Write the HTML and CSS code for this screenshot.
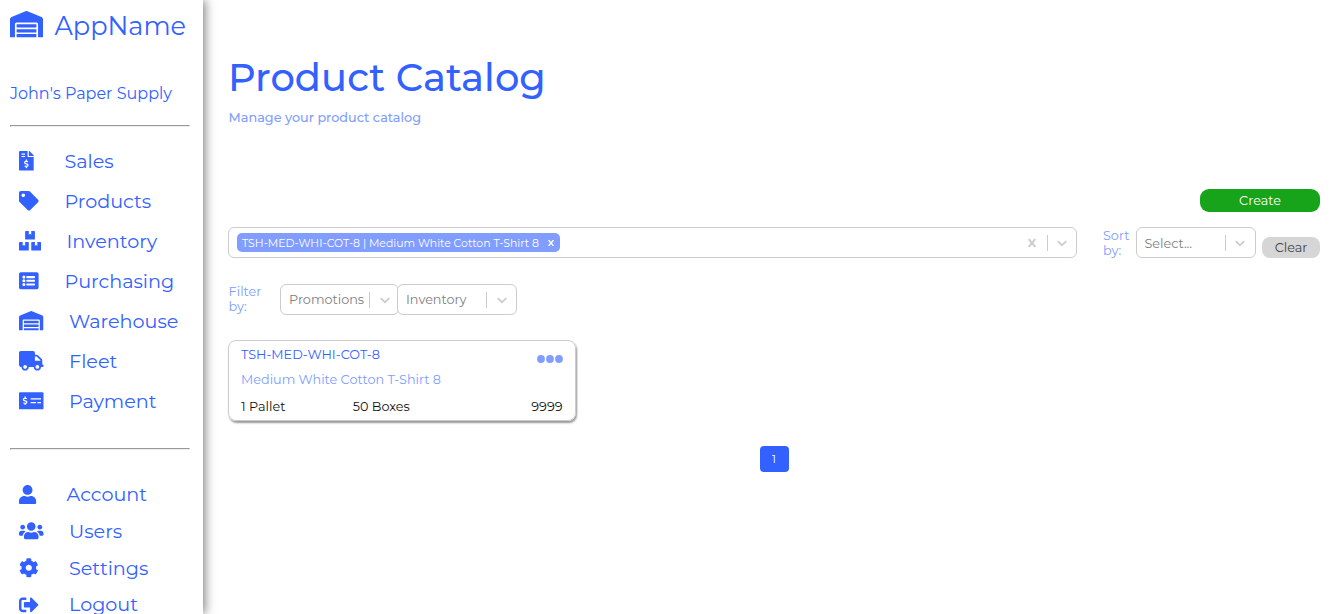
FILE: index.html
```html
<!DOCTYPE html>
<html lang="en">
<head>
<meta charset="utf-8">
<title>Product Catalog</title>
<link rel="stylesheet" href="styles.css">
</head>
<body>
<svg class="defs" width="0" height="0" aria-hidden="true">
  <symbol id="warehouse" viewBox="0 0 640 512"><path d="M504 352H136.4c-4.4 0-8 3.6-8 8l-.1 48c0 4.4 3.6 8 8 8H504c4.4 0 8-3.6 8-8v-48c0-4.4-3.6-8-8-8zm0 96H136.1c-4.4 0-8 3.6-8 8l-.1 48c0 4.4 3.6 8 8 8h368c4.4 0 8-3.6 8-8v-48c0-4.4-3.6-8-8-8zm0-192H136.6c-4.4 0-8 3.6-8 8l-.1 48c0 4.4 3.6 8 8 8H504c4.4 0 8-3.6 8-8v-48c0-4.4-3.6-8-8-8zm106.5-139L338.4 3.7a48.15 48.15 0 0 0-36.9 0L29.5 117C11.7 124.5 0 141.9 0 161.3V504c0 4.4 3.6 8 8 8h80c4.4 0 8-3.6 8-8V256c0-17.6 14.6-32 32.6-32h382.8c18 0 32.6 14.4 32.6 32v248c0 4.4 3.6 8 8 8h80c4.4 0 8-3.6 8-8V161.3c0-19.4-11.7-36.8-29.5-44.3z"/></symbol>
  <symbol id="chevron" viewBox="0 0 20 20"><path d="M4.516 7.548c0.436-0.446 1.043-0.481 1.576 0l3.908 3.747 3.908-3.747c0.533-0.481 1.141-0.446 1.574 0 0.436 0.445 0.408 1.197 0 1.615-0.406 0.418-4.695 4.502-4.695 4.502-0.217 0.223-0.502 0.335-0.787 0.335s-0.57-0.112-0.789-0.335c0 0-4.287-4.084-4.695-4.502s-0.436-1.17 0-1.615z"/></symbol>
  <symbol id="cross" viewBox="0 0 20 20"><path d="M14.348 14.849c-0.469 0.469-1.229 0.469-1.697 0l-2.651-3.030-2.651 3.029c-0.469 0.469-1.229 0.469-1.697 0-0.469-0.469-0.469-1.229 0-1.697l2.758-3.15-2.759-3.152c-0.469-0.469-0.469-1.228 0-1.697s1.228-0.469 1.697 0l2.652 3.031 2.651-3.031c0.469-0.469 1.228-0.469 1.697 0s0.469 1.229 0 1.697l-2.758 3.152 2.758 3.15c0.469 0.469 0.469 1.229 0 1.698z"/></symbol>
</svg>
<div class="app">
  <aside class="sidebar">
    <div class="brand"><svg class="brand-icon"><use href="#warehouse"/></svg><span class="brand-name">AppName</span></div>
    <div class="company">John's Paper Supply</div>
    <hr class="rule">
    <nav class="nav">
      <a class="item"><svg class="icon" viewBox="0 0 640 512"><path d="M377 105L279.1 7c-4.5-4.5-10.6-7-17-7H256v128h128v-6.1c0-6.3-2.5-12.4-7-16.9zm-153 31V0H24C10.7 0 0 10.7 0 24v464c0 13.3 10.7 24 24 24h336c13.3 0 24-10.7 24-24V160H248c-13.2 0-24-10.8-24-24zM64 72c0-4.42 3.58-8 8-8h80c4.42 0 8 3.58 8 8v16c0 4.42-3.58 8-8 8H72c-4.42 0-8-3.58-8-8V72zm0 80v-16c0-4.42 3.58-8 8-8h80c4.42 0 8 3.58 8 8v16c0 4.42-3.58 8-8 8H72c-4.42 0-8-3.58-8-8zm144 263.88V440c0 4.42-3.58 8-8 8h-16c-4.42 0-8-3.58-8-8v-24.29c-11.29-.58-22.27-4.52-31.37-11.35-3.9-2.93-4.1-8.77-.57-12.14l11.75-11.21c2.77-2.64 6.89-2.76 10.13-.73 3.87 2.42 8.26 3.72 12.82 3.72h28.11c6.5 0 11.8-5.92 11.8-13.19 0-5.95-3.61-11.19-8.77-12.73l-45-13.5c-18.59-5.58-31.58-23.42-31.58-43.39 0-24.52 19.05-44.44 42.67-45.07V232c0-4.42 3.58-8 8-8h16c4.42 0 8 3.58 8 8v24.29c11.29.58 22.27 4.51 31.37 11.35 3.9 2.93 4.1 8.77.57 12.14l-11.75 11.21c-2.77 2.64-6.89 2.76-10.13.73-3.87-2.43-8.26-3.72-12.82-3.72h-28.11c-6.5 0-11.8 5.92-11.8 13.19 0 5.95 3.61 11.19 8.77 12.73l45 13.5c18.59 5.58 31.58 23.42 31.58 43.39 0 24.53-19.05 44.44-42.67 45.07z"/></svg><span class="label near">Sales</span></a>
      <a class="item"><svg class="icon" viewBox="0 0 640 512"><path d="M0 252.118V48C0 21.49 21.49 0 48 0h204.118a48 48 0 0 1 33.941 14.059l211.882 211.882c18.745 18.745 18.745 49.137 0 67.882L293.823 497.941c-18.745 18.745-49.137 18.745-67.882 0L14.059 286.059A48 48 0 0 1 0 252.118zM112 64c-26.51 0-48 21.49-48 48s21.49 48 48 48 48-21.49 48-48-21.49-48-48-48z"/></svg><span class="label near">Products</span></a>
      <a class="item"><svg class="icon" viewBox="0 0 640 512"><path d="M560 288h-80v96l-32-21.3-32 21.3v-96h-80c-8.8 0-16 7.2-16 16v192c0 8.8 7.2 16 16 16h224c8.8 0 16-7.2 16-16V304c0-8.8-7.2-16-16-16zm-384-64h224c8.8 0 16-7.2 16-16V16c0-8.8-7.2-16-16-16h-80v96l-32-21.3L256 96V0h-80c-8.8 0-16 7.2-16 16v192c0 8.8 7.2 16 16 16zm64 64h-80v96l-32-21.3L96 384v-96H16c-8.8 0-16 7.2-16 16v192c0 8.8 7.2 16 16 16h224c8.8 0 16-7.2 16-16V304c0-8.8-7.2-16-16-16z"/></svg><span class="label mid">Inventory</span></a>
      <a class="item"><svg class="icon" viewBox="0 0 640 512"><path d="M464 480H48c-26.5 0-48-21.500-48-48V80c0-26.500 21.500-48 48-48h416c26.500 0 48 21.500 48 48v352c0 26.500-21.500 48-48 48zM128 120a40 40 0 1 0 0 80 40 40 0 0 0 0-80zm0 96a40 40 0 1 0 0 80 40 40 0 0 0 0-80zm0 96a40 40 0 1 0 0 80 40 40 0 0 0 0-80zm288-136v-32c0-6.600-5.400-12-12-12H204c-6.600 0-12 5.400-12 12v32c0 6.600 5.400 12 12 12h200c6.600 0 12-5.400 12-12zm0 96v-32c0-6.600-5.400-12-12-12H204c-6.600 0-12 5.400-12 12v32c0 6.600 5.400 12 12 12h200c6.600 0 12-5.400 12-12zm0 96v-32c0-6.600-5.400-12-12-12H204c-6.600 0-12 5.400-12 12v32c0 6.600 5.400 12 12 12h200c6.600 0 12-5.400 12-12z"/></svg><span class="label near">Purchasing</span></a>
      <a class="item"><svg class="icon"><use href="#warehouse"/></svg><span class="label">Warehouse</span></a>
      <a class="item"><svg class="icon" viewBox="0 0 640 512"><path d="M624 352h-16V243.900c0-12.700-5.100-24.900-14.100-33.900L494 110.100c-9-9-21.200-14.100-33.900-14.100H416V48c0-26.500-21.500-48-48-48H48C21.500 0 0 21.500 0 48v320c0 26.500 21.500 48 48 48h16c0 53 43 96 96 96s96-43 96-96h128c0 53 43 96 96 96s96-43 96-96h48c8.800 0 16-7.200 16-16v-32c0-8.800-7.200-16-16-16zM160 464c-26.500 0-48-21.500-48-48s21.500-48 48-48 48 21.500 48 48-21.500 48-48 48zm320 0c-26.500 0-48-21.500-48-48s21.500-48 48-48 48 21.500 48 48-21.500 48-48 48zm80-208H416V144h44.100l99.900 99.900V256z"/></svg><span class="label">Fleet</span></a>
      <a class="item"><svg class="icon" viewBox="0 0 640 512"><rect y="32" width="640" height="448" rx="24"/><g fill="#fff"><rect x="304" y="192" width="272" height="32" rx="6"/><rect x="304" y="288" width="144" height="32" rx="6"/><rect x="480" y="288" width="96" height="32" rx="6"/><path transform="translate(-32 -80)" d="M208 415.880V440c0 4.420-3.580 8-8 8h-16c-4.420 0-8-3.580-8-8v-24.290c-11.290-.580-22.270-4.520-31.370-11.350-3.900-2.930-4.100-8.770-.570-12.140l11.750-11.210c2.770-2.640 6.890-2.760 10.130-.730 3.870 2.420 8.260 3.720 12.820 3.720h28.110c6.500 0 11.800-5.920 11.800-13.190 0-5.950-3.610-11.190-8.770-12.730l-45-13.500c-18.590-5.580-31.580-23.420-31.580-43.390 0-24.520 19.050-44.440 42.670-45.070V232c0-4.420 3.580-8 8-8h16c4.420 0 8 3.580 8 8v24.290c11.290.580 22.270 4.510 31.370 11.350 3.900 2.930 4.100 8.770.570 12.140l-11.750 11.210c-2.770 2.640-6.890 2.760-10.130.730-3.870-2.430-8.260-3.720-12.820-3.720h-28.110c-6.500 0-11.800 5.920-11.800 13.190 0 5.950 3.610 11.190 8.770 12.730l45 13.500c18.590 5.580 31.580 23.420 31.580 43.390 0 24.530-19.050 44.440-42.670 45.070z"/></g></svg><span class="label">Payment</span></a>
    </nav>
    <hr class="rule">
    <nav class="nav account">
      <a class="item"><svg class="icon" viewBox="0 0 640 512"><path d="M224 256c70.700 0 128-57.300 128-128S294.700 0 224 0 96 57.300 96 128s57.300 128 128 128zm89.600 32h-16.700c-22.200 10.200-46.900 16-72.900 16s-50.600-5.800-72.900-16h-16.700C60.200 288 0 348.200 0 422.400V464c0 26.500 21.500 48 48 48h352c26.500 0 48-21.500 48-48v-41.600c0-74.200-60.200-134.400-134.400-134.400z"/></svg><span class="label mid">Account</span></a>
      <a class="item"><svg class="icon" viewBox="0 0 640 512"><path d="M96 224c35.300 0 64-28.700 64-64s-28.700-64-64-64-64 28.700-64 64 28.700 64 64 64zm448 0c35.300 0 64-28.700 64-64s-28.700-64-64-64-64 28.700-64 64 28.700 64 64 64zm32 32h-64c-17.600 0-33.500 7.100-45.100 18.600 40.300 22.100 68.900 62 75.100 109.400h66c17.700 0 32-14.300 32-32v-32c0-35.300-28.700-64-64-64zm-256 0c61.900 0 112-50.100 112-112S381.900 32 320 32 208 82.100 208 144s50.100 112 112 112zm76.800 32h-8.300c-20.800 10-43.900 16-68.500 16s-47.600-6-68.500-16h-8.300C179.600 288 128 339.600 128 403.200V432c0 26.500 21.500 48 48 48h288c26.500 0 48-21.500 48-48v-28.800c0-63.600-51.600-115.200-115.200-115.200zm-223.700-13.400C161.500 263.100 145.600 256 128 256H64c-35.300 0-64 28.700-64 64v32c0 17.700 14.300 32 32 32h65.900c6.300-47.400 34.900-87.300 75.200-109.400z"/></svg><span class="label">Users</span></a>
      <a class="item"><svg class="icon" viewBox="0 0 640 512"><path d="M487.400 315.700l-42.600-24.600c4.300-23.200 4.300-47 0-70.200l42.600-24.600c4.900-2.800 7.100-8.600 5.500-14-11.100-35.600-30-67.800-54.700-94.600-3.800-4.100-10-5.100-14.800-2.300L380.800 110c-17.900-15.400-38.500-27.300-60.800-35.100V25.800c0-5.600-3.900-10.500-9.400-11.700-36.700-8.200-74.300-7.800-109.200 0-5.500 1.200-9.400 6.100-9.400 11.700V75c-22.200 7.900-42.800 19.800-60.800 35.100L88.700 85.500c-4.900-2.800-11-1.900-14.800 2.300-24.700 26.700-43.600 58.900-54.700 94.600-1.700 5.400.6 11.200 5.500 14L67.300 221c-4.300 23.200-4.300 47 0 70.200l-42.600 24.600c-4.900 2.800-7.100 8.600-5.500 14 11.100 35.600 30 67.800 54.700 94.600 3.800 4.100 10 5.100 14.800 2.300l42.600-24.600c17.900 15.400 38.500 27.300 60.800 35.100v49.200c0 5.600 3.900 10.500 9.400 11.700 36.700 8.200 74.300 7.800 109.200 0 5.500-1.200 9.400-6.100 9.400-11.700v-49.200c22.200-7.900 42.800-19.800 60.800-35.100l42.600 24.600c4.900 2.800 11 1.900 14.800-2.300 24.700-26.700 43.600-58.900 54.700-94.600 1.500-5.500-.7-11.300-5.600-14.100zM256 336c-44.100 0-80-35.900-80-80s35.900-80 80-80 80 35.900 80 80-35.900 80-80 80z"/></svg><span class="label">Settings</span></a>
      <a class="item"><svg class="icon" viewBox="0 0 640 512"><path d="M497 273L329 441c-15 15-41 4.500-41-17v-96H152c-13.300 0-24-10.700-24-24v-96c0-13.300 10.700-24 24-24h136V88c0-21.400 25.900-32 41-17l168 168c9.300 9.400 9.300 24.600 0 34zM192 436v-40c0-6.600-5.400-12-12-12H96c-17.700 0-32-14.300-32-32V160c0-17.700 14.300-32 32-32h84c6.600 0 12-5.400 12-12V76c0-6.600-5.400-12-12-12H96c-53 0-96 43-96 96v192c0 53 43 96 96 96h84c6.600 0 12-5.400 12-12z"/></svg><span class="label">Logout</span></a>
    </nav>
  </aside>
  <main class="main">
    <h1 class="title">Product Catalog</h1>
    <p class="subtitle">Manage your product catalog</p>
    <div class="actions"><button class="create">Create</button></div>
    <div class="toolbar">
      <div class="select search">
        <span class="tag"><span class="tag-text">TSH-MED-WHI-COT-8 | Medium White Cotton T-Shirt 8</span><svg class="tag-x"><use href="#cross"/></svg></span>
        <svg class="clear-x"><use href="#cross"/></svg>
        <span class="divider"></span><svg class="chev"><use href="#chevron"/></svg>
      </div>
      <span class="by sort">Sort<br>by:</span>
      <div class="select order"><span class="value">Select...</span><span class="divider"></span><svg class="chev"><use href="#chevron"/></svg></div>
      <button class="clear">Clear</button>
    </div>
    <div class="filters">
      <span class="by filter">Filter<br>by:</span>
      <div class="select promo"><span class="value">Promotions</span><span class="divider"></span><svg class="chev"><use href="#chevron"/></svg></div>
      <div class="select inv"><span class="value">Inventory</span><span class="divider"></span><svg class="chev"><use href="#chevron"/></svg></div>
    </div>
    <article class="card">
      <div class="card-head"><span class="sku">TSH-MED-WHI-COT-8</span><svg class="dots" viewBox="0 0 26 8"><circle cx="4" cy="4" r="3.900"/><circle cx="13" cy="4" r="3.900"/><circle cx="22" cy="4" r="3.900"/></svg></div>
      <div class="name">Medium White Cotton T-Shirt 8</div>
      <div class="stock"><span class="pallet">1 Pallet</span><span class="boxes">50 Boxes</span><span class="qty">9999</span></div>
    </article>
    <div class="pager"><button class="page">1</button></div>
  </main>
</div>
</body>
</html>
```
FILE: styles.css
```css
* { box-sizing: border-box; }
body { margin: 0; height: 614px; overflow: hidden; background: #fff; font-family: Montserrat, Inter, sans-serif; font-size: 12.8px; color: #222; }
svg { display: block; flex: none; fill: currentColor; }
button { border: 0; padding: 0; font: inherit; }
.defs { position: absolute; }
.app { display: flex; height: 614px; }
.sidebar { width: 203px; flex: none; padding: 0 13px 0 10px; color: #3361ff; box-shadow: 2px 0 10px rgba(0, 0, 0, .5); overflow: hidden; }
.brand { display: flex; align-items: center; height: 50px; }
.brand-icon { width: 33px; height: 26.4px; margin-top: -1px; }
.brand-name { margin-left: 11.5px; font-size: 25.6px; }
.company { margin-top: 34px; height: 20px; line-height: 20px; font-size: 16px; white-space: nowrap; }
.rule { margin: 21px 0 0; width: 180px; border: 1px solid; border-color: #999 #eee #eee #999; }
.nav { padding: 14px 0 0 9.4px; }
.item { display: flex; align-items: center; height: 40px; }
.icon { width: 24.5px; height: 19.6px; margin-top: .5px; }
.label { margin-left: 25.1px; font-size: 19.2px; white-space: nowrap; }
.near { margin-left: 20.5px; }
.mid { margin-left: 22.6px; }
.nav + .rule { margin-top: 27px; }
.account { padding-top: 26px; }
.account .item { height: 36.7px; }
.main { flex: 1; padding: 54px 24px 0 25px; }
.title { margin: 0; height: 48px; line-height: 48px; font-size: 38.4px; font-weight: 500; letter-spacing: .06px; color: #3361ff; }
.subtitle { margin: 7px 0 0; padding-left: .6px; height: 18px; line-height: 18px; font-weight: 500; color: #809dff; }
.actions { display: flex; justify-content: flex-end; margin-top: 62px; }
.create { width: 120px; height: 23px; border-radius: 9px; background: #17a31a; color: #fff; }
.toolbar { display: flex; align-items: center; height: 31px; margin-top: 15px; }
.select { display: flex; align-items: center; width: 120px; height: 31px; flex: none; border: 1px solid #ccc; border-radius: 6px; background: #fff; padding: 0 7px 0 8px; }
.search { width: 849px; padding-right: 6px; }
.tag { display: flex; align-items: center; width: 323px; height: 19px; border-radius: 5px; padding-left: 5px; background: #809dff; color: #fff; }
.tag-text { flex: 1; font-size: 10.88px; white-space: nowrap; }
.tag-x { width: 12px; height: 12px; margin-right: 3px; }
.clear-x { width: 16px; height: 16px; margin-left: auto; color: #ccc; }
.divider { width: 1px; height: 16px; background: #ccc; margin-left: auto; }
.clear-x + .divider { margin-left: 7px; }
.chev { width: 16px; height: 16px; margin-left: 6px; color: #ccc; }
.order .value { padding-top: 1px; margin-left: -.5px; }
.value { color: #808080; }
.by { line-height: 15px; color: #809dff; }
.sort { width: 33px; margin-left: 26px; }
.clear { align-self: flex-end; width: 58px; height: 21px; margin-left: 6px; border-radius: 8px; background: #d6d6d6; color: #444; }
.filters { display: flex; align-items: center; margin-top: 26px; }
.filter { width: 52px; height: 31px; padding-left: .6px; }
.promo { width: 119px; padding-right: 5px; }
.promo .divider, .inv .divider { margin-right: 1px; }
.inv { margin-left: -2px; padding-right: 6px; }
.card { width: 348px; height: 81px; margin-top: 25px; padding: 6px 12.5px 0 12px; border: 1px solid #ccc; border-radius: 8px; box-shadow: 1px 2px 2px #999; line-height: 16px; }
.card-head { display: flex; justify-content: space-between; height: 16px; }
.sku { color: #3361ff; }
.dots { width: 26px; height: 8px; margin-top: 8px; color: #809dff; }
.name { margin-top: 9px; color: #809dff; }
.stock { display: flex; margin-top: 11px; color: #111; }
.boxes { margin-left: 67.4px; }
.qty { margin-left: auto; }
.pager { display: flex; justify-content: center; margin-top: 25px; }
.page { width: 29px; height: 26px; border-radius: 4px; background: #3361ff; color: #fff; font-size: 10.88px; }
```
